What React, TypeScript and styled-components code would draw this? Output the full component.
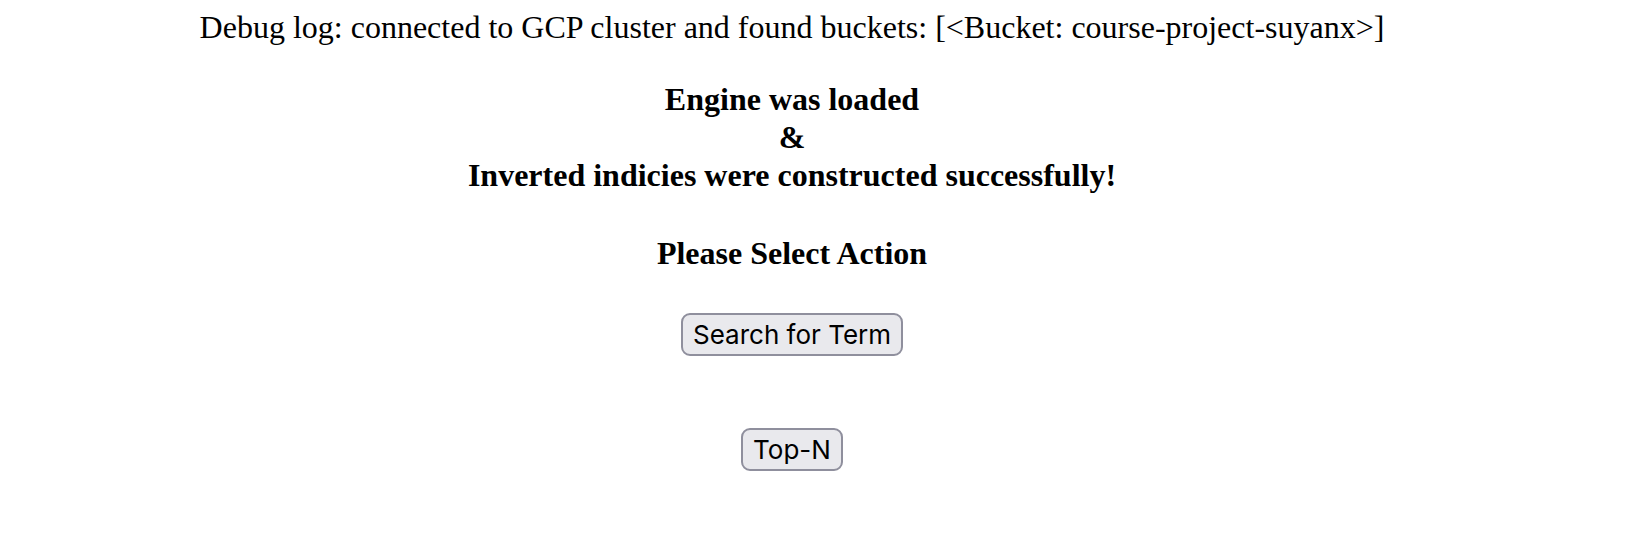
import styled, { createGlobalStyle } from "styled-components";

const GlobalStyle = createGlobalStyle`
    html, body {
        margin: 0;
        padding: 0;
        background: #ffffff;
    }
    body {
        font-family: "Liberation Serif", "Times New Roman", serif;
        color: #000000;
    }
`

const App = () => {
    return (
        <>
            <GlobalStyle />
            <Page>
                <DebugLine>
                    Debug log: connected to GCP cluster and found buckets: [&lt;Bucket: course-project-suyanx&gt;]
                </DebugLine>
                <Heading>
                    Engine was loaded
                    <br />
                    &amp;
                    <br />
                    Inverted indicies were constructed successfully!
                </Heading>
                <Heading $gap={40}>Please Select Action</Heading>
                <Actions>
                    <ActionButton>Search for Term</ActionButton>
                    <ActionButton>Top-N</ActionButton>
                </Actions>
            </Page>
        </>
    )
}

const Page = styled.div`
    display: flex;
    flex-direction: column;
    align-items: center;
    width: 1584px;
    padding-top: 7px;
    text-align: center;
`

const DebugLine = styled.div`
    font-size: 32px;
    line-height: 40px;
    font-weight: 400;
`

const Heading = styled.div<{ $gap?: number }>`
    margin-top: ${props => props.$gap ?? 33}px;
    font-size: 32px;
    line-height: 38px;
    font-weight: 700;
`

const Actions = styled.div`
    display: flex;
    flex-direction: column;
    align-items: center;
    gap: 72px;
    margin-top: 41px;
`

const ActionButton = styled.button`
    font-family: Inter, "Noto Sans", sans-serif;
    font-size: 26px;
    line-height: 35px;
    color: #000000;
    padding: 2px 10px;
    background: #e9e9ed;
    border: 2px solid #8f8f9d;
    border-radius: 9px;
    cursor: pointer;

    &:hover {
        background: #d0d0d7;
    }
`

export default App;
